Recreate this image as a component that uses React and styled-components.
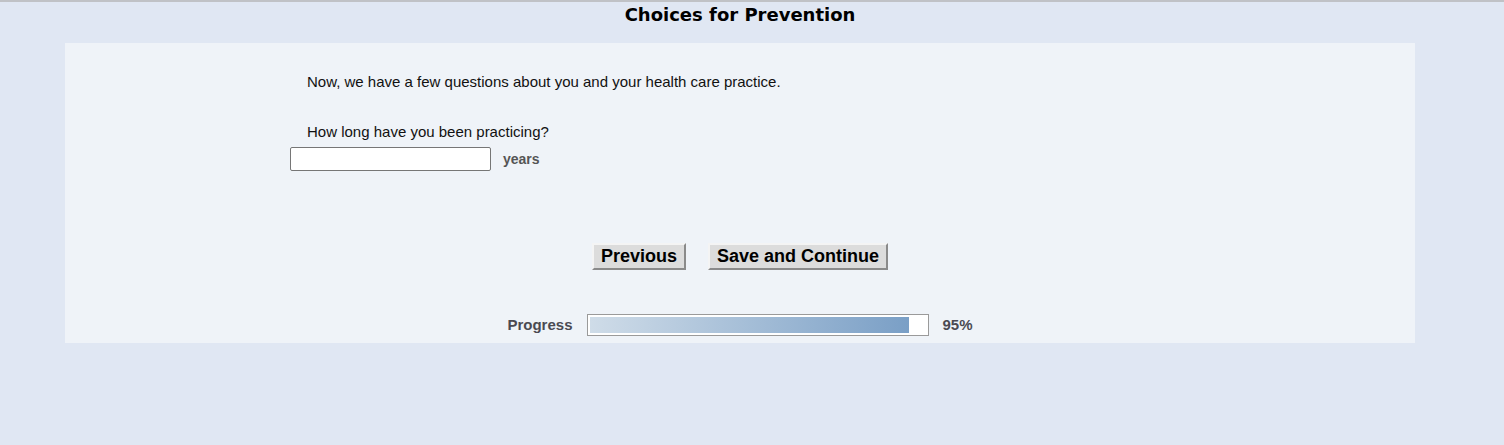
import React from "react";
import styled, { createGlobalStyle } from "styled-components";

const Global = createGlobalStyle`
  html, body { margin: 0; padding: 0; }
  body {
    background: #e0e7f3;
    font-family: "Liberation Sans", Arial, sans-serif;
    min-height: 445px;
  }
`;

const Page = styled.div`
  border-top: 2px solid #c0c2c6;
  display: flex;
  flex-direction: column;
  align-items: center;
  padding-right: 24px;
`;

const Title = styled.h1`
  margin: 0;
  padding-top: 2px;
  height: 41px;
  font-family: "DejaVu Sans", Verdana, sans-serif;
  font-weight: bold;
  font-size: 18px;
  line-height: 22px;
  color: #000;
  text-align: center;
  width: 100%;
  box-sizing: border-box;
`;

const Panel = styled.main`
  width: 1350px;
  height: 300px;
  background: #eff3f8;
  display: flex;
  flex-direction: column;
  align-items: center;
  box-sizing: border-box;
  padding-top: 30px;
`;

const Content = styled.div`
  width: 900px;
  display: flex;
  flex-direction: column;
`;

const Paragraph = styled.p`
  margin: 0 0 0 17px;
  font-size: 15px;
  line-height: 18px;
  color: #111;
  margin-bottom: ${(p) => p.$gap || 0}px;
`;

const AnswerRow = styled.div`
  display: flex;
  align-items: center;
  gap: 12px;
  margin-top: 6px;
`;

const TextInput = styled.input`
  width: 201px;
  height: 24px;
  box-sizing: border-box;
  border: 1px solid #767676;
  border-radius: 2px;
  background: #fff;
  padding: 0 4px;
  font-family: "Liberation Sans", Arial, sans-serif;
  font-size: 14px;
`;

const Unit = styled.span`
  font-size: 14px;
  font-weight: bold;
  color: #555;
`;

const Buttons = styled.div`
  display: flex;
  gap: 22px;
  justify-content: center;
  margin-top: 72px;
`;

const Button = styled.button`
  height: 27px;
  box-sizing: border-box;
  padding: 0 7px;
  background: #dcdcdc;
  border: 2px solid;
  border-color: #f4f4f4 #8a8a8a #8a8a8a #f4f4f4;
  font-family: "Liberation Sans", Arial, sans-serif;
  font-weight: bold;
  font-size: 18px;
  line-height: 21px;
  color: #000;
  cursor: pointer;
`;

const ProgressRow = styled.div`
  display: flex;
  align-items: center;
  justify-content: center;
  gap: 14px;
  margin-top: 44px;
`;

const ProgressLabel = styled.span`
  font-size: 15px;
  font-weight: bold;
  color: #4a4a52;
  margin-top: -2px;
`;

const Track = styled.div`
  width: 342px;
  height: 22px;
  box-sizing: border-box;
  border: 1px solid #9a9a9a;
  background: #fff;
  padding: 2px;
  display: flex;
`;

const Fill = styled.div`
  height: 100%;
  background: linear-gradient(to right, #cfdce8, #7a9fc6);
`;

export default function App() {
  const pct = 95;
  return (
    <>
      <Global />
      <Page>
        <Title>Choices for Prevention</Title>
        <Panel>
          <Content>
            <Paragraph $gap={32}>
              Now, we have a few questions about you and your health care practice.
            </Paragraph>
            <Paragraph>How long have you been practicing?</Paragraph>
            <AnswerRow>
              <TextInput type="text" />
              <Unit>years</Unit>
            </AnswerRow>
          </Content>
          <Buttons>
            <Button>Previous</Button>
            <Button>Save and Continue</Button>
          </Buttons>
          <ProgressRow>
            <ProgressLabel>Progress</ProgressLabel>
            <Track>
              <Fill style={{ width: `${pct}%` }} />
            </Track>
            <ProgressLabel>{pct}%</ProgressLabel>
          </ProgressRow>
        </Panel>
      </Page>
    </>
  );
}
